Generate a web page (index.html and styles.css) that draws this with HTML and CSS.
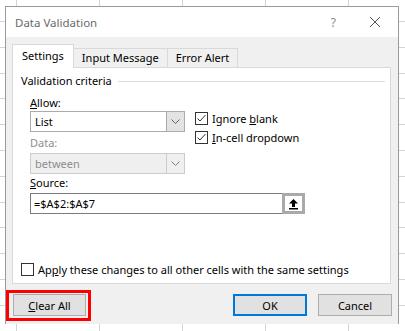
FILE: index.html
```html
<!doctype html>
<html lang="en-US">
<head>
<meta charset="utf-8" />
<meta name="viewport" content="width=device-width" />
<title>Data Validation</title>
<link rel="stylesheet" href="styles.css">
</head>
<body>
<div class="dialog">
	<div class="titlebar">
		<span class="title">Data Validation</span>
		<span class="help">?</span>
		<svg class="close" width="12" height="12" viewBox="0 0 12 12"><path d="M1 1L11 11M11 1L1 11" stroke="#555" stroke-width="1" fill="none"/></svg>
	</div>

	<div class="tabs">
		<div class="tab active">Settings</div>
		<div class="tab">Input Message</div>
		<div class="tab">Error Alert</div>
	</div>

	<div class="panel">
		<div class="group-title"><span>Validation criteria</span><span class="rule"></span></div>

		<div class="criteria">
			<div class="left">
				<div class="label"><u>A</u>llow:</div>
				<div class="combo">
					<span class="value">List</span>
					<span class="drop"><svg width="9" height="5" viewBox="0 0 9 5"><path d="M0.5 0.5L4.5 4.5L8.5 0.5" stroke="#606060" fill="none"/></svg></span>
				</div>
				<div class="label disabled">Data:</div>
				<div class="combo off">
					<span class="value">between</span>
					<span class="drop"><svg width="9" height="5" viewBox="0 0 9 5"><path d="M0.5 0.5L4.5 4.5L8.5 0.5" stroke="#808080" fill="none"/></svg></span>
				</div>
			</div>
			<div class="right">
				<label class="check"><span class="box"><svg width="11" height="11" viewBox="0 0 11 11"><path d="M1.5 5.5L4 8L9.5 2" stroke="#333" stroke-width="1" fill="none"/></svg></span><span>Ignore <u>b</u>lank</span></label>
				<label class="check"><span class="box"><svg width="11" height="11" viewBox="0 0 11 11"><path d="M1.5 5.5L4 8L9.5 2" stroke="#333" stroke-width="1" fill="none"/></svg></span><span><u>I</u>n-cell dropdown</span></label>
			</div>
		</div>

		<div class="label source-label"><u>S</u>ource:</div>
		<div class="source">
			<div class="input">=$A$2:$A$7</div>
			<div class="picker"><svg width="11" height="12" viewBox="0 0 11 12"><path d="M5.5 1L10 5.5H7V9H4V5.5H1Z" fill="#000"/><rect x="1" y="10" width="9" height="1.5" fill="#000"/></svg></div>
		</div>

		<label class="check apply"><span class="box"></span><span>Ap<u>p</u>ly these changes to all other cells with the same settings</span></label>
	</div>

	<div class="buttons">
		<button class="btn clear"><u>C</u>lear All</button>
		<span class="spacer"></span>
		<button class="btn default">OK</button>
		<button class="btn">Cancel</button>
	</div>
</div>
</body>
</html>
```

FILE: styles.css
```css
* {
	box-sizing: border-box;
}
body {
	margin: 0;
	width: 405px;
	height: 331px;
	overflow: hidden;
	font-family: "Noto Sans", sans-serif;
	font-size: 11px;
	color: #000;
	background-color: #fff;
	background-image:
		repeating-linear-gradient(to right, transparent 0, transparent 16px, #d4d4d4 16px, #d4d4d4 17px, transparent 17px, transparent 83px),
		repeating-linear-gradient(to bottom, transparent 0, transparent 21px, #d4d4d4 21px, #d4d4d4 22px, transparent 22px, transparent 25.8px);
}
.dialog {
	margin: 6px 0 0 5px;
	width: 394px;
	height: 318px;
	border: 1px solid #9a9a9a;
	border-bottom: none;
	background: #f0f0f0;
	display: flex;
	flex-direction: column;
}
.titlebar {
	height: 30px;
	flex: none;
	background: #fff;
	display: flex;
	align-items: center;
	padding: 0 17px 0 9px;
}
.title {
	flex: 1;
	color: #6a6a6a;
	font-size: 11.5px;
}
.help {
	color: #8a8a8a;
	font-size: 12px;
	margin-right: 33px;
}
.tabs {
	display: flex;
	flex: none;
	align-items: flex-end;
	margin: 7px 0 0 6px;
	height: 23px;
}
.tab {
	height: 19px;
	padding: 0 8px;
	border: 1px solid #d9d9d9;
	border-bottom: none;
	border-left: none;
	background: #f0f0f0;
	line-height: 18px;
}
.tab.active {
	height: 24px;
	line-height: 22px;
	background: #fff;
	border-left: 1px solid #d9d9d9;
	margin-bottom: -1px;
	padding: 0 9px;
	position: relative;
}
.panel {
	flex: none;
	margin: 0 7px 0 6px;
	height: 217px;
	background: #fff;
	border: 1px solid #d9d9d9;
	padding: 5px 5px 0 8px;
}
.group-title {
	display: flex;
	align-items: center;
	gap: 6px;
	line-height: 16px;
}
.rule {
	flex: 1;
	height: 1px;
	background: #dcdcdc;
}
.criteria {
	display: flex;
	padding-left: 9px;
}
.left {
	width: 155px;
}
.right {
	padding: 20px 0 0 10px;
}
.label {
	margin-top: 6px;
	line-height: 16px;
}
.label.disabled {
	color: #8d8d8d;
	margin-top: 3px;
	margin-bottom: 2px;
}
.combo {
	height: 21px;
	border: 1px solid #ababab;
	display: flex;
	align-items: stretch;
	background: #fff;
}
.combo .value {
	flex: 1;
	padding-left: 4px;
	line-height: 19px;
}
.combo .drop {
	width: 18px;
	background: #e3e3e3;
	border-left: 1px solid #ababab;
	display: flex;
	align-items: center;
	justify-content: center;
}
.combo.off {
	background: #efefef;
	border-color: #cccccc;
	color: #8d8d8d;
}
.combo.off .drop {
	background: #efefef;
	border-left-color: #cccccc;
}
.check {
	display: flex;
	align-items: center;
	gap: 4px;
	height: 19px;
}
.box {
	width: 13px;
	height: 13px;
	border: 1px solid #333;
	background: #fff;
	display: flex;
}
.source-label {
	margin-left: 9px;
	margin-top: 1px;
	margin-bottom: 2px;
}
.source {
	display: flex;
	margin-left: 9px;
	width: 275px;
	height: 21px;
}
.source .input {
	flex: 1;
	border: 1px solid #7a7a7a;
	border-right: none;
	padding-left: 3px;
	line-height: 19px;
}
.picker {
	width: 23px;
	border: 3px solid #a9a9a9;
	background: #fff;
	display: flex;
	align-items: center;
	justify-content: center;
}
.apply {
	margin-top: 46px;
	gap: 4px;
}
.buttons {
	display: flex;
	gap: 11px;
	padding: 10px 6px 0 7px;
}
.spacer {
	flex: 1;
}
.btn {
	width: 74px;
	height: 22px;
	font-family: inherit;
	font-size: 11px;
	color: #000;
	background: #e1e1e1;
	border: 1px solid #adadad;
	padding: 0;
}
.btn.default {
	border: 2px solid #0078d7;
}
.btn.clear {
	position: relative;
	width: 73px;
}
.btn.clear::after {
	content: "";
	position: absolute;
	left: -8px;
	top: -5px;
	right: -6px;
	bottom: -6px;
	border: 3px solid #ff0000;
}
```
